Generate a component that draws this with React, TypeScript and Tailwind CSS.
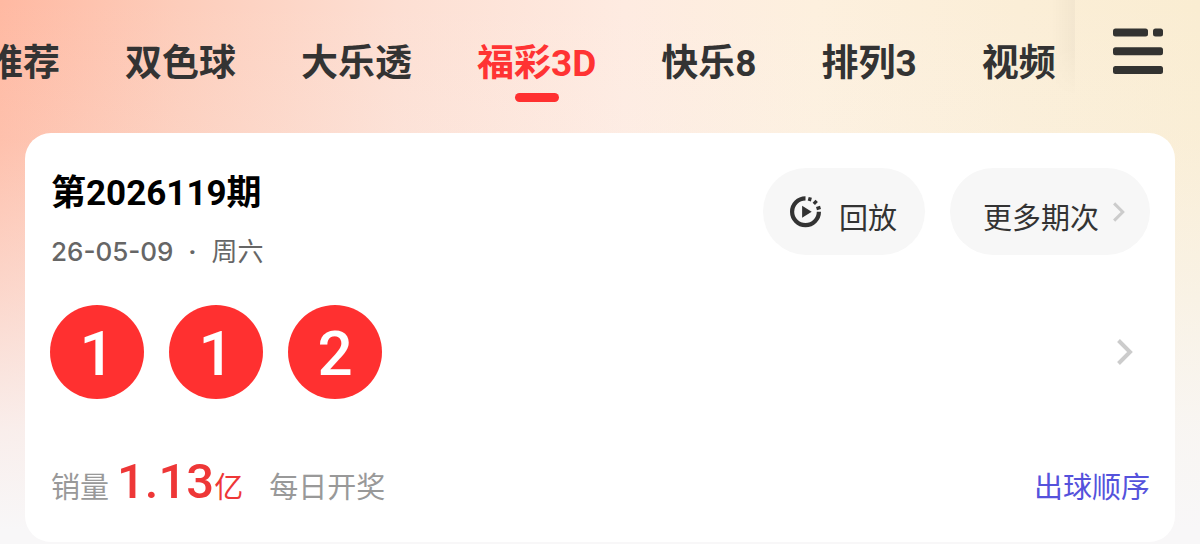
const tabs = ['推荐', '双色球', '大乐透', '福彩3D', '快乐8', '排列3', '视频'];
const balls = [1, 1, 2];

function MenuIcon() {
  return (
    <svg width="52" height="48" viewBox="0 0 52 48" fill="#333331" aria-hidden="true">
      <rect x="1" y="1.5" width="35" height="8" rx="2.5" />
      <rect x="41" y="1.5" width="10" height="8" rx="2.5" />
      <rect x="1" y="20.3" width="50" height="8" rx="2.5" />
      <rect x="1" y="39" width="50" height="8" rx="2.5" />
    </svg>
  );
}

function ReplayIcon() {
  return (
    <svg width="32" height="32" viewBox="0 0 32 32" fill="none" stroke="#333" aria-hidden="true">
      <path d="M15.5 2.4A13.4 13.4 0 1 0 28.9 15.8" strokeWidth="4.2" />
      <path d="M19.3 5l1-3.6M23.8 7.8l2.9-3M26.5 12.6l4-1.2" strokeWidth="3.3" />
      <path d="M12.1 9.8v12l9.6-6z" fill="#333" stroke="none" />
    </svg>
  );
}

function Chevron({ className }: { className: string }) {
  return (
    <svg className={className} viewBox="0 0 16 26" fill="none" stroke="#ccc" strokeWidth="4" aria-hidden="true">
      <path d="M1.5 1.5L13 13L1.5 24.5" />
    </svg>
  );
}

export default function App() {
  return (
    <div className="min-h-screen bg-[linear-gradient(to_bottom,rgba(248,247,248,0)_0px,rgba(248,247,248,0.12)_140px,rgba(248,247,248,0.48)_290px,rgba(248,247,248,0.85)_430px,#f8f7f8_530px),linear-gradient(to_right,#ffb9a2_0%,#fdcdbb_15%,#fddfd3_33%,#feebe1_52%,#fdf0de_68%,#fbeed7_85%,#faedd2_100%)] pb-0.5 font-[Roboto,'Noto_Sans_CJK_SC',sans-serif] text-[#333]">
      <header className="flex h-[133px]">
        <nav className="relative min-w-0 flex-1 overflow-hidden" aria-label="彩种">
          <div className="-ml-3.5 flex gap-[65px] pt-9">
            {tabs.map((tab) => {
              const active = tab === '福彩3D';
              return (
                <a
                  key={tab}
                  href="#"
                  aria-current={active ? 'page' : undefined}
                  className={`flex shrink-0 flex-col items-center gap-0.5 text-[37px] leading-[55px] font-bold whitespace-nowrap ${active ? 'text-[#ff3333]' : ''}`}
                >
                  {tab}
                  {active && <span className="h-[9px] w-11 rounded-full bg-[#ff3030]" />}
                </a>
              );
            })}
          </div>
          <div className="pointer-events-none absolute top-0 right-0 h-24 w-6 bg-linear-to-r from-transparent to-black/3 mask-b-from-50%" />
        </nav>
        <div className="w-[125px] shrink-0 pt-[27px] pl-[37px]">
          <button type="button" aria-label="菜单" className="block">
            <MenuIcon />
          </button>
        </div>
      </header>

      <main className="mx-[25px] rounded-[26px] bg-white px-[25px] pt-[35px] pb-[22px]">
        <div className="flex items-start justify-between">
          <div className="pt-0.5 pl-px">
            <h1 className="text-[35px] leading-[48px] font-bold text-black">第2026119期</h1>
            <p className="mt-3.5 flex items-center text-[26px] leading-10 text-[#666]">
              <span className="font-[Inter,sans-serif] font-medium">26-05-09</span>
              <span className="w-[38px] text-center font-bold">·</span>
              <span>周六</span>
            </p>
          </div>
          <div className="flex gap-[25px] text-[29px]">
            <button type="button" className="flex h-[87px] items-center gap-[17px] rounded-full bg-[#f7f7f7] pr-7 pl-[27px]">
              <ReplayIcon />
              <span className="pt-4">回放</span>
            </button>
            <button type="button" className="flex h-[87px] items-center gap-3.5 rounded-full bg-[#f7f7f7] pr-[25px] pl-[33px]">
              <span className="pt-4">更多期次</span>
              <Chevron className="h-5 w-3" />
            </button>
          </div>
        </div>

        <a href="#" aria-label="开奖详情" className="mt-[33px] flex items-center justify-between pr-[17px]">
          <span className="flex gap-[25px]">
            {balls.map((n, i) => (
              <span key={i} className="flex size-[94px] items-center justify-center rounded-full bg-[#ff3030] pt-1 text-[62px] leading-none font-medium text-white">
                {n}
              </span>
            ))}
          </span>
          <Chevron className="h-[26px] w-4" />
        </a>

        <div className="mt-[51px] flex items-baseline pl-px text-[29px] leading-[64px] text-[#999]">
          <span>销量</span>
          <span className="ml-2 text-[49px] font-medium text-[#ee3737]">1.13</span>
          <span className="text-[#ee3737]">亿</span>
          <span className="ml-[26px]">每日开奖</span>
          <a href="#" className="ml-auto text-[#5552dc]">出球顺序</a>
        </div>
      </main>
    </div>
  );
}
